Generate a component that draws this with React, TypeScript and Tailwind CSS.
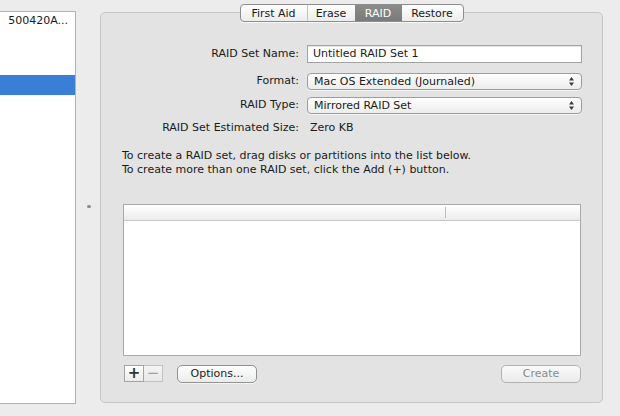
import { useState } from 'react';

const tabs = ['First Aid', 'Erase', 'RAID', 'Restore'];

function UpDown() {
  return (
    <svg width="7" height="11" viewBox="0 0 7 11" className="shrink-0">
      <path d="M3.5 1 L6 4.5 H1 Z" fill="#3a3a3a" />
      <path d="M3.5 10 L6 6.5 H1 Z" fill="#3a3a3a" />
    </svg>
  );
}

function PopUp({ value }: { value: string }) {
  return (
    <div className="flex h-[17px] items-center justify-between rounded-[4px] border border-[#9d9d9d] bg-gradient-to-b from-white to-[#ececec] pl-[6px] pr-[6px] shadow-[0_1px_0_rgba(255,255,255,0.6)]">
      <span className="leading-none">{value}</span>
      <UpDown />
    </div>
  );
}

export default function App() {
  const [active, setActive] = useState('RAID');

  return (
    <div className="relative flex h-[416px] w-[620px] overflow-hidden bg-[#ececec] text-[11px] text-[#1a1a1a] [font-family:'DejaVu_Sans','Liberation_Sans',sans-serif]">
      {/* disk list */}
      <div className="mt-[11px] h-[393px] w-[76px] shrink-0 border-y border-r border-[#b3b3b3] bg-white">
        <div className="flex h-[18px] items-center justify-end whitespace-nowrap pr-[7px]">
          500420A...
        </div>
        <div className="mt-[45px] h-[20px] bg-[#3a7fd5]" />
      </div>

      {/* splitter */}
      <div className="relative w-[24px] shrink-0">
        <div className="absolute left-[11px] top-[205px] h-[3px] w-[4px] rounded-full bg-[#8d8d8d]" />
      </div>

      {/* tab panel */}
      <div className="mt-[12px] flex h-[391px] w-[503px] flex-col rounded-[5px] border border-[#c6c6c6] bg-[#e3e3e3]">
        <div className="-mt-[9px] flex h-[18px] self-center overflow-hidden rounded-[4px] border border-[#8e8e8e] bg-gradient-to-b from-white to-[#ececec] shadow-[0_1px_0_rgba(255,255,255,0.7)]">
          {tabs.map((t, i) => (
            <button
              key={t}
              onClick={() => setActive(t)}
              className={
                'flex h-full items-center justify-center leading-none ' +
                (i === 0 ? 'w-[66px] ' : i === 1 ? 'w-[48px] ' : i === 2 ? 'w-[47px] ' : 'w-[61px] ') +
                (active === t
                  ? 'bg-gradient-to-b from-[#8b8b8b] to-[#7a7a7a] text-white'
                  : i > 0 && tabs[i - 1] !== active
                    ? 'border-l border-[#c4c4c4]'
                    : '')
              }
            >
              {t}
            </button>
          ))}
        </div>

        <div className="mt-[23px] grid grid-cols-[198px_275px] items-center gap-x-[8px] pr-[22px]">
          <div className="text-right">RAID Set Name:</div>
          <div className="flex h-[18px] items-center border border-[#a3a3a3] bg-white pl-[5px] shadow-[inset_0_1px_1px_rgba(0,0,0,0.12)]">
            Untitled RAID Set 1
          </div>

          <div className="mt-[10px] text-right">Format:</div>
          <div className="mt-[10px]">
            <PopUp value="Mac OS Extended (Journaled)" />
          </div>

          <div className="mt-[7px] text-right">RAID Type:</div>
          <div className="mt-[7px]">
            <PopUp value="Mirrored RAID Set" />
          </div>

          <div className="mt-[6px] text-right">RAID Set Estimated Size:</div>
          <div className="mt-[6px] pl-[3px]">Zero KB</div>
        </div>

        <div className="mt-[12px] pl-[21px] leading-[14px]">
          <p>To create a RAID set, drag disks or partitions into the list below.</p>
          <p>To create more than one RAID set, click the Add (+) button.</p>
        </div>

        <div className="ml-[22px] mt-[27px] flex h-[152px] w-[458px] flex-col border border-[#a9a9a9] bg-white">
          <div className="flex h-[16px] border-b border-[#c8c8c8] bg-gradient-to-b from-white to-[#ececec]">
            <div className="my-[2px] w-[322px] border-r border-[#bdbdbd]" />
            <div className="flex-1" />
          </div>
        </div>

        <div className="ml-[23px] mt-[9px] flex h-[18px] items-center pr-[21px]">
          <div className="flex h-[17px]">
            <div className="flex w-[20px] items-center justify-center border border-[#a4a4a4] bg-gradient-to-b from-white to-[#ebebeb] text-[15px] font-bold leading-none text-[#333]">
              +
            </div>
            <div className="flex w-[19px] items-center justify-center border-y border-r border-[#c2c2c2] bg-gradient-to-b from-[#f4f4f4] to-[#e8e8e8] text-[15px] leading-none text-[#a0a0a0]">
              −
            </div>
          </div>
          <button className="ml-[14px] flex h-[18px] w-[80px] items-center justify-center rounded-[5px] border border-[#929292] bg-gradient-to-b from-white to-[#ebebeb] leading-none shadow-[0_1px_0_rgba(255,255,255,0.6)]">
            Options...
          </button>
          <button className="ml-auto flex h-[18px] w-[80px] items-center justify-center rounded-[5px] border border-[#b2b2b2] bg-gradient-to-b from-[#fafafa] to-[#ebebeb] leading-none text-[#8a8a8a]">
            Create
          </button>
        </div>
      </div>
    </div>
  );
}
